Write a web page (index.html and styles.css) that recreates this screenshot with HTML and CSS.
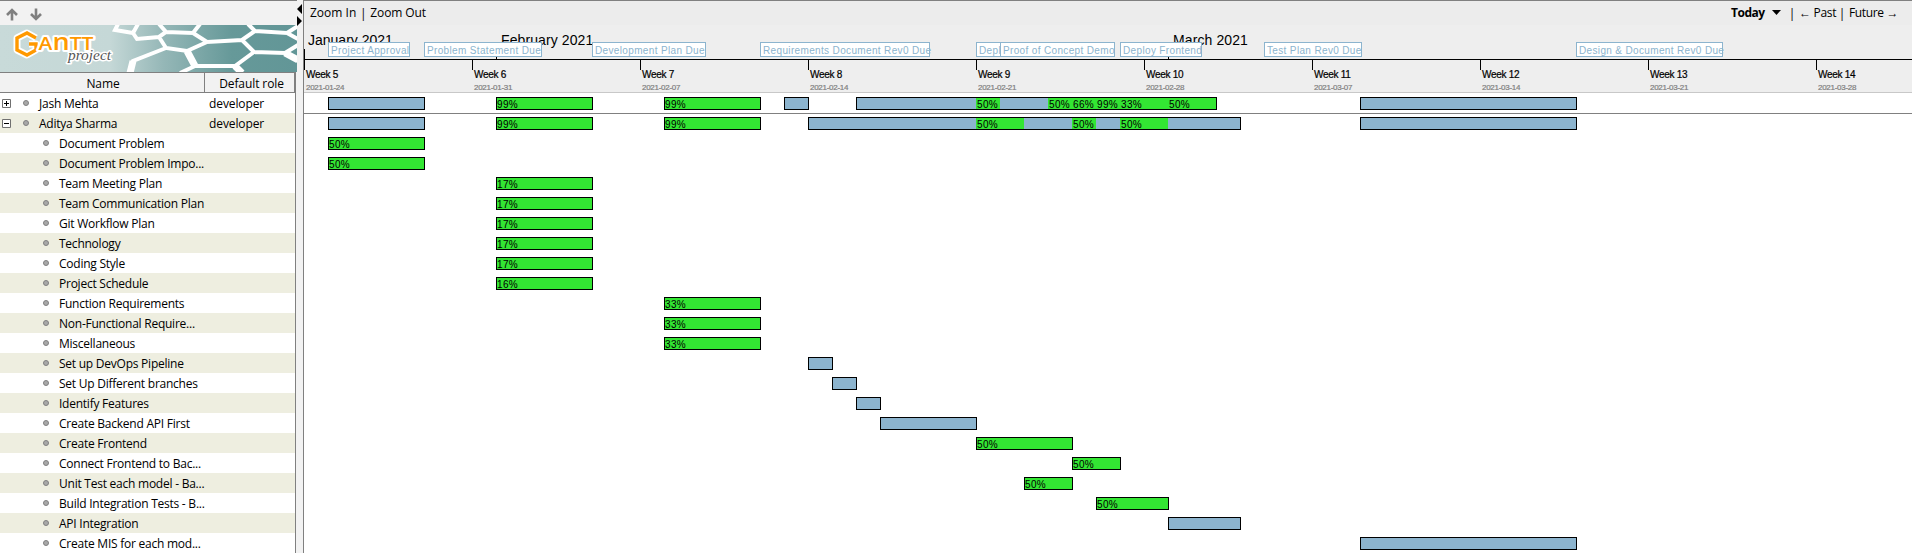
FILE: index.html
```html
<!DOCTYPE html>
<html lang="en">
<head>
<meta charset="utf-8">
<title>GanttProject</title>
<link rel="stylesheet" href="styles.css">
</head>
<body>
<div class="app">
  <aside class="side">
    <div class="side-tools">
      <svg width="12" height="13" viewBox="0 0 12 13"><path class="arrow" d="M6 12.500V2.500M1 7L6 2L11 7"/></svg>
      <svg width="12" height="13" viewBox="0 0 12 13"><path class="arrow" d="M6 0.500V10.500M1 6L6 11L11 6"/></svg>
    </div>
    <svg class="banner" width="297" height="47" viewBox="0 0 297 47">
      <defs>
        <linearGradient id="fade" x1="0" x2="1" y1="0" y2="0">
          <stop offset="0" stop-color="#c8dad9"/><stop offset=".37" stop-color="#c5d8d7"/>
          <stop offset=".55" stop-color="#95b7b7"/><stop offset=".78" stop-color="#669999"/><stop offset="1" stop-color="#629697"/>
        </linearGradient>
      </defs>
      <rect width="297" height="47" fill="url(#fade)"/>
      <g class="comb">
        <path d="M118 -1L115 5L133 8L138 -1M133 8L137 14L159 12L166 7L159 -1M166 7L193 8L200 -1M193 8L207 17L242 15L255 6L248 -1M255 6L287 8L298 1M287 8L298 14M159 12L166 23L187 26L207 17M242 15L254 27L285 28L298 20M285 28L298 35M254 27L235 41L195 41L187 26M166 23L133 36L130 48M235 41L242 48M195 41L180 48"/>
        <path class="comb-wide" d="M187 26L195 41M133 36L130 48M235 41L242 48M285 28L298 35"/>
      </g>
      <g class="mark">
        <path class="halo" d="M36 13L27 8L17 13V25L27 30L36 25V19H29"/>
        <path class="hex" d="M36 13L27 8L17 13V25L27 30L36 25V19H29"/>
      </g>
      <text class="logo-main" x="38.500" y="25" textLength="55" lengthAdjust="spacingAndGlyphs">A<tspan class="logo-n">n</tspan>TT</text>
      <text class="logo-sub" x="68" y="35" textLength="43" lengthAdjust="spacingAndGlyphs">project</text>
    </svg>
    <div class="thead"><div class="th th-name">Name</div><div class="th th-role">Default role</div></div>
    <div class="tree">
      <div class="node top"><svg class="box" width="9" height="9"><path d="M.5 .5H8.500V8.500H.5Z"/><path class="sign" d="M2 4.500H7M4.500 2V7"/></svg><i class="dot"></i><span class="name">Jash Mehta</span><span class="role">developer</span></div>
      <div class="node top"><svg class="box" width="9" height="9"><path d="M.5 .5H8.500V8.500H.5Z"/><path class="sign" d="M2 4.500H7"/></svg><i class="dot"></i><span class="name">Aditya Sharma</span><span class="role">developer</span></div>
      <div class="node"><i class="dot"></i><span class="name">Document Problem</span></div>
      <div class="node"><i class="dot"></i><span class="name">Document Problem Impo...</span></div>
      <div class="node"><i class="dot"></i><span class="name">Team Meeting Plan</span></div>
      <div class="node"><i class="dot"></i><span class="name">Team Communication Plan</span></div>
      <div class="node"><i class="dot"></i><span class="name">Git Workflow Plan</span></div>
      <div class="node"><i class="dot"></i><span class="name">Technology</span></div>
      <div class="node"><i class="dot"></i><span class="name">Coding Style</span></div>
      <div class="node"><i class="dot"></i><span class="name">Project Schedule</span></div>
      <div class="node"><i class="dot"></i><span class="name">Function Requirements</span></div>
      <div class="node"><i class="dot"></i><span class="name">Non-Functional Require...</span></div>
      <div class="node"><i class="dot"></i><span class="name">Miscellaneous</span></div>
      <div class="node"><i class="dot"></i><span class="name">Set up DevOps Pipeline</span></div>
      <div class="node"><i class="dot"></i><span class="name">Set Up Different branches</span></div>
      <div class="node"><i class="dot"></i><span class="name">Identify Features</span></div>
      <div class="node"><i class="dot"></i><span class="name">Create Backend API First</span></div>
      <div class="node"><i class="dot"></i><span class="name">Create Frontend</span></div>
      <div class="node"><i class="dot"></i><span class="name">Connect Frontend to Bac...</span></div>
      <div class="node"><i class="dot"></i><span class="name">Unit Test each model - Ba...</span></div>
      <div class="node"><i class="dot"></i><span class="name">Build Integration Tests - B...</span></div>
      <div class="node"><i class="dot"></i><span class="name">API Integration</span></div>
      <div class="node"><i class="dot"></i><span class="name">Create MIS for each mod...</span></div>
    </div>
  </aside>
  <div class="split">
    <svg width="6" height="22" viewBox="0 0 6 22"><path d="M5 0V10L0 5ZM0 12V22L5 17Z"/></svg>
  </div>
  <main class="chart">
    <div class="chart-tools">
      <span>Zoom In</span><span class="bar-sep">|</span><span class="zoom-out">Zoom Out</span>
      <b class="today">Today</b><svg class="caret" width="9" height="5"><path d="M0 0H9L4.500 5Z"/></svg>
      <span class="bar-sep">|</span><span class="past">← Past</span><span class="bar-sep">|</span><span class="future">Future →</span>
    </div>
    <div class="months days">
      <span class="month" style="grid-column:1">January 2021</span>
      <span class="month" style="grid-column:9">February 2021</span>
      <span class="month" style="grid-column:37">March 2021</span>
      <div class="miles">
        <span class="mile" style="left:24px;width:82px">Project Approval</span>
        <span class="mile" style="left:120px;width:118px">Problem Statement Due</span>
        <span class="mile" style="left:288px;width:114px">Development Plan Due</span>
        <span class="mile" style="left:456px;width:170px">Requirements Document Rev0 Due</span>
        <span class="mile" style="left:672px;width:25px">Depl</span>
        <span class="mile" style="left:696px;width:115px">Proof of Concept Demo</span>
        <span class="mile" style="left:816px;width:82px">Deploy Frontend</span>
        <span class="mile" style="left:960px;width:98px">Test Plan Rev0 Due</span>
        <span class="mile" style="left:1272px;width:147px">Design &amp; Document Rev0 Due</span>
      </div>
    </div>
    <div class="weeks">
      <div class="week"><span>Week 5</span><small>2021-01-24</small></div>
      <div class="week"><span>Week 6</span><small>2021-01-31</small></div>
      <div class="week"><span>Week 7</span><small>2021-02-07</small></div>
      <div class="week"><span>Week 8</span><small>2021-02-14</small></div>
      <div class="week"><span>Week 9</span><small>2021-02-21</small></div>
      <div class="week"><span>Week 10</span><small>2021-02-28</small></div>
      <div class="week"><span>Week 11</span><small>2021-03-07</small></div>
      <div class="week"><span>Week 12</span><small>2021-03-14</small></div>
      <div class="week"><span>Week 13</span><small>2021-03-21</small></div>
      <div class="week"><span>Week 14</span><small>2021-03-28</small></div>
    </div>
    <div class="rows">
      <div class="row days">
        <div class="bar" style="grid-column:2/6"></div>
        <div class="bar full" style="grid-column:9/13">99%</div>
        <div class="bar full" style="grid-column:16/20">99%</div>
        <div class="bar" style="grid-column:21/22"></div>
        <div class="bar" style="grid-column:24/39"></div>
        <div class="seg" style="grid-column:29/30">50%</div>
        <div class="seg" style="grid-column:32/33">50%</div>
        <div class="seg" style="grid-column:33/34">66%</div>
        <div class="seg" style="grid-column:34/35">99%</div>
        <div class="seg" style="grid-column:35/37">33%</div>
        <div class="seg" style="grid-column:37/39">50%</div>
        <div class="bar" style="grid-column:45/54"></div>
      </div>
      <div class="row days ruled">
        <div class="bar" style="grid-column:2/6"></div>
        <div class="bar full" style="grid-column:9/13">99%</div>
        <div class="bar full" style="grid-column:16/20">99%</div>
        <div class="bar" style="grid-column:22/40"></div>
        <div class="seg" style="grid-column:29/31">50%</div>
        <div class="seg" style="grid-column:33/34">50%</div>
        <div class="seg" style="grid-column:35/37">50%</div>
        <div class="bar" style="grid-column:45/54"></div>
      </div>
      <div class="row days"><div class="bar full" style="grid-column:2/6">50%</div></div>
      <div class="row days"><div class="bar full" style="grid-column:2/6">50%</div></div>
      <div class="row days"><div class="bar full" style="grid-column:9/13">17%</div></div>
      <div class="row days"><div class="bar full" style="grid-column:9/13">17%</div></div>
      <div class="row days"><div class="bar full" style="grid-column:9/13">17%</div></div>
      <div class="row days"><div class="bar full" style="grid-column:9/13">17%</div></div>
      <div class="row days"><div class="bar full" style="grid-column:9/13">17%</div></div>
      <div class="row days"><div class="bar full" style="grid-column:9/13">16%</div></div>
      <div class="row days"><div class="bar full" style="grid-column:16/20">33%</div></div>
      <div class="row days"><div class="bar full" style="grid-column:16/20">33%</div></div>
      <div class="row days"><div class="bar full" style="grid-column:16/20">33%</div></div>
      <div class="row days"><div class="bar" style="grid-column:22/23"></div></div>
      <div class="row days"><div class="bar" style="grid-column:23/24"></div></div>
      <div class="row days"><div class="bar" style="grid-column:24/25"></div></div>
      <div class="row days"><div class="bar" style="grid-column:25/29"></div></div>
      <div class="row days"><div class="bar full" style="grid-column:29/33">50%</div></div>
      <div class="row days"><div class="bar full" style="grid-column:33/35">50%</div></div>
      <div class="row days"><div class="bar full" style="grid-column:31/33">50%</div></div>
      <div class="row days"><div class="bar full" style="grid-column:34/37">50%</div></div>
      <div class="row days"><div class="bar" style="grid-column:37/40"></div></div>
      <div class="row days"><div class="bar" style="grid-column:45/54"></div></div>
    </div>
  </main>
</div>
</body>
</html>
```
FILE: styles.css
```css
* { box-sizing: border-box; }
body { margin: 0; background: #f2f2f2; font: 12px/20px "Open Sans", "Noto Sans", sans-serif; color: #000; }
.app { display: flex; width: 1912px; height: 553px; overflow: hidden; }

/* Resource tree */
.side { width: 297px; flex: none; border-top: 1px solid #808080; }
.side-tools { height: 24px; display: flex; gap: 12px; padding: 7px 0 0 6px; }
.arrow { fill: none; stroke: #808080; stroke-width: 2.6; }
.banner { display: block; }
.comb path { fill: none; stroke: #fff; stroke-width: 4; }
.comb .comb-wide { stroke-width: 7; }
.mark path { fill: none; stroke-linejoin: round; }
.mark .halo { stroke: #fff; stroke-width: 7; }
.mark .hex { stroke: #ff9900; stroke-width: 3.4; stroke-linejoin: miter; }
.logo-main { font: 600 17.5px "Open Sans", sans-serif; fill: #ff9900; stroke: #fff; stroke-width: 4px; paint-order: stroke; stroke-linejoin: round; }
.logo-n { font-size: 22.5px; }
.logo-sub { font: italic 15px "Liberation Serif", serif; fill: #555; stroke: #fff; stroke-width: 3px; paint-order: stroke; stroke-linejoin: round; }
.thead { display: flex; width: 296px; height: 21px; border-top: 1px solid #808080; border-bottom: 1px solid #808080; border-right: 2px solid #808080; }
.th { text-align: center; line-height: 22px; height: 19px; letter-spacing: -.1px; }
.th-name { width: 205px; padding-left: 2px; border-right: 1px solid #808080; }
.th-role { flex: 1; padding-left: 4px; }
.tree { width: 296px; border-right: 1px solid #808080; background: #fff; }
.node { height: 20px; display: flex; align-items: center; padding-left: 43px; letter-spacing: -.24px; white-space: nowrap; }
.node span { padding-top: 2px; }
.node:nth-child(even) { background: #eeeee0; }
.top { padding-left: 2px; }
.box { margin-right: 12px; fill: #fff; stroke: #707070; }
.box .sign { stroke: #000; }
.dot { width: 6px; height: 6px; border-radius: 50%; background: #a8a8a8; border: 1px solid #808080; margin-right: 10px; flex: none; margin-top: -1px; }
.top .name { width: 170px; }
.top .role { letter-spacing: -.1px; }

/* Divider */
.split { width: 6px; flex: none; padding-top: 4px; background: #f2f2f2; }
.split svg { display: block; }

/* Timeline */
.chart { width: 1609px; flex: none; border-left: 1px solid #808080; border-top: 1px solid #808080; background: #fff; }
.chart-tools { height: 24px; display: flex; align-items: center; padding-left: 6px; background: #ececec; line-height: 24px; white-space: nowrap; }
.bar-sep { width: 14px; text-align: center; padding-top: 2px; }
.zoom-out { letter-spacing: -.1px; }
.today { margin-left: auto; width: 41px; font-weight: 700; letter-spacing: -.5px; }
.caret { margin-right: 4px; margin-top: -1px; }
.past { width: 36px; letter-spacing: -.3px; }
.future { width: 63px; letter-spacing: -.35px; }
.days { display: grid; grid-template-columns: repeat(67, 24px); }
.months { position: relative; height: 35px; background: #eee; border-bottom: 1px solid #000; font: 14px/18px "Liberation Sans", sans-serif; }
.month { padding: 6px 0 0 3px; white-space: nowrap; border-left: 1px solid transparent; border-image: linear-gradient(transparent 24px, #000 24px) 1; margin-right: -120px; }
.month + .month { padding-left: 4px; letter-spacing: .1px; }
.miles { position: absolute; left: 0; top: 17px; }
.mile { position: absolute; top: 0; height: 15px; padding-left: 2px; border: 1px solid #8cb4ce; background: #fff; color: #8cb4ce; font: 10px/16px "Liberation Sans", sans-serif; letter-spacing: .35px; white-space: nowrap; }
.weeks { height: 33px; display: grid; grid-template-columns: repeat(10, 168px); background: #eee; border-bottom: 1px solid #c8c8c8; overflow: hidden; font-family: "Liberation Sans", sans-serif; }
.week { display: flex; flex-direction: column; padding: 10px 0 0 2px; background: linear-gradient(#000, #000) no-repeat 0 0 / 1px 10px; }
.week span { font-size: 10px; line-height: 10px; letter-spacing: -.3px; -webkit-text-stroke: .2px #000; }
.week small { font-size: 8px; line-height: 10px; margin-top: 3px; letter-spacing: -.28px; color: #808080; -webkit-text-stroke: .2px #808080; }
.row { height: 20px; grid-template-rows: 13px; padding-top: 4px; }
.ruled { border-top: 1px solid #808080; padding-top: 3px; }
.bar, .seg { grid-row: 1; font: 10px/13px "Liberation Sans", sans-serif; letter-spacing: .35px; white-space: nowrap; }
.bar { margin-right: -1px; border: 1px solid #000; background: #8cb4ce; }
.full { background: #33e633; }
.seg { margin: 1px 0; padding-left: 1px; background: #33e633; }
```
